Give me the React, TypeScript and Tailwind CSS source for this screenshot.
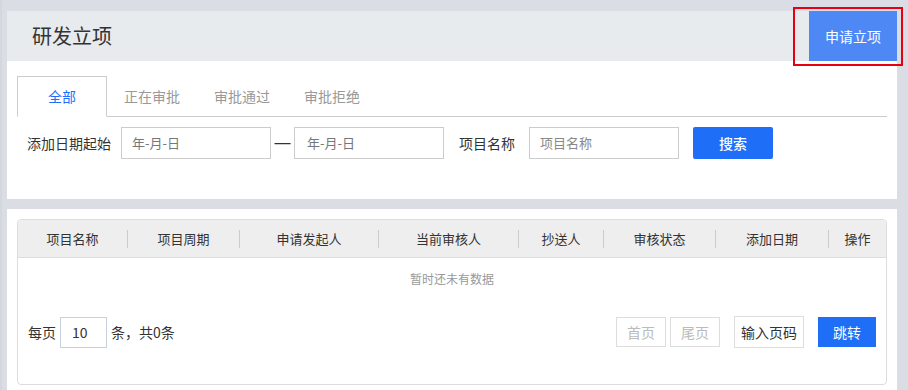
import React from "react";

const font = { fontFamily: '"Noto Sans CJK SC", "Noto Sans", sans-serif' };

export default function App() {
  const cols = [
    { t: "项目名称", w: 110 },
    { t: "项目周期", w: 112 },
    { t: "申请发起人", w: 139 },
    { t: "当前审核人", w: 140 },
    { t: "抄送人", w: 85 },
    { t: "审核状态", w: 112 },
    { t: "添加日期", w: 113 },
    { t: "操作", w: 57 },
  ];
  return (
    <div style={font} className="relative w-[908px] h-[390px] overflow-hidden bg-[#dadde4] pl-[7px] pr-[11px] pt-[11px]">
      <div className="absolute left-0 top-0 w-[2px] h-full bg-[#d4d7de]" />
      {/* header */}
      <div className="flex h-[50px] items-center justify-between bg-[#e8ebee]">
        <div className="pl-[25px] text-[20px] text-[#333] leading-none">研发立项</div>
        <div className="flex h-full w-[88px] items-center justify-center bg-[#4d88f5] text-[14px] text-white">申请立项</div>
      </div>
      {/* annotation */}
      <div className="absolute left-[793px] top-[7px] h-[59px] w-[110px] border-2 border-[#e60012]" />
      {/* card 1 */}
      <div className="h-[138px] bg-white px-[10px] pt-[15px]">
        <div className="flex h-[41px] border-b border-[#ccc]">
          <div className="-mb-px flex h-[41px] w-[90px] items-center justify-center border border-b-white border-[#ccc] bg-white text-[14px] text-[#1e6fff]">全部</div>
          <div className="flex w-[90px] items-center justify-center text-[14px] text-[#999]">正在审批</div>
          <div className="flex w-[90px] items-center justify-center text-[14px] text-[#999]">审批通过</div>
          <div className="flex w-[90px] items-center justify-center text-[14px] text-[#999]">审批拒绝</div>
        </div>
        <div className="mt-[10px] flex items-center pl-[10px] text-[14px] text-[#333]">
          <span className="w-[84px]">添加日期起始</span>
          <div className="ml-[10px] flex h-[32px] w-[150px] items-center border border-[#ccc] pl-[10px] text-[13px] text-[#777]">年-月-日</div>
          <span className="flex w-[23px] items-center justify-center text-[#333]" style={{ fontFamily: '"Liberation Sans", sans-serif', fontSize: 16 }}>—</span>
          <div className="flex h-[32px] w-[150px] items-center border border-[#ccc] pl-[12px] text-[13px] text-[#777]">年-月-日</div>
          <span className="ml-[15px]">项目名称</span>
          <div className="ml-[14px] flex h-[32px] w-[150px] items-center border border-[#ccc] pl-[10px] text-[13px] text-[#888]">项目名称</div>
          <div className="ml-[14px] flex h-[32px] w-[80px] items-center justify-center rounded-[2px] bg-[#1e6ef7] text-[14px] font-medium text-white">搜索</div>
        </div>
      </div>
      {/* card 2 */}
      <div className="mt-[10px] h-[200px] bg-white px-[10px] pt-[10px]">
        <div className="h-[166px] w-[870px] rounded-[4px] border border-[#ddd]">
          <div className="flex h-[38px] items-center rounded-t-[4px] border-b border-[#ddd] bg-[#eeeeee] text-[13px] text-[#333]">
            {cols.map((c, i) => (
              <div key={i} className={`flex h-[18px] items-center justify-center ${i < cols.length - 1 ? "border-r border-[#ccc]" : ""}`} style={{ width: c.w }}>
                {c.t}
              </div>
            ))}
          </div>
          <div className="pt-[12px] text-center text-[12px] leading-[18px] text-[#999]">暂时还未有数据</div>
          <div className="mt-[28px] flex items-center px-[10px] text-[14px] text-[#333]">
            <span>每页</span>
            <div className="ml-[4px] flex h-[31px] w-[47px] items-center border border-[#c8d0dc] pl-[11px] text-[14px]">10</div>
            <span className="ml-[4px]">条，共0条</span>
            <div className="ml-auto flex items-center">
              <div className="flex h-[30px] w-[50px] items-center justify-center border border-[#ddd] text-[#bbb]">首页</div>
              <div className="ml-[4px] flex h-[30px] w-[50px] items-center justify-center border border-[#ddd] text-[#bbb]">尾页</div>
              <div className="ml-[14px] flex h-[32px] w-[70px] items-center justify-center border border-[#ddd] text-[#333]">输入页码</div>
              <div className="ml-[14px] flex h-[30px] w-[58px] items-center justify-center bg-[#1e6ef7] text-white">跳转</div>
            </div>
          </div>
        </div>
      </div>
    </div>
  );
}
